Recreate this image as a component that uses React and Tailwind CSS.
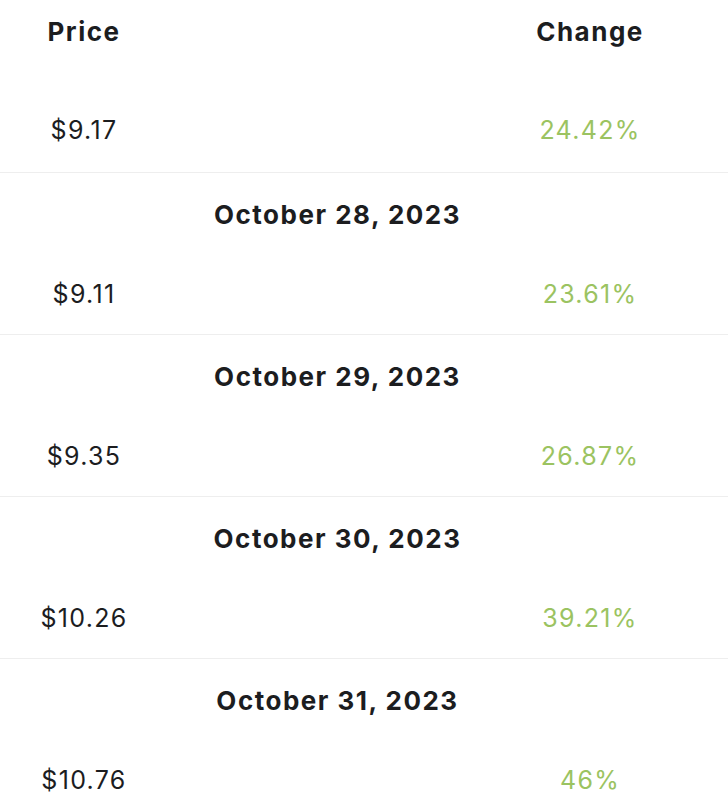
const rows = [
  { date: "October 28, 2023", price: "$9.11", change: "23.61%" },
  { date: "October 29, 2023", price: "$9.35", change: "26.87%" },
  { date: "October 30, 2023", price: "$10.26", change: "39.21%" },
  { date: "October 31, 2023", price: "$10.76", change: "46%" },
];

function PriceRow({ price, change, className }) {
  return (
    <div className={"flex items-center text-[25px] tracking-[1.3px] " + className}>
      <div className="w-[168px] text-center text-[#1c1d1f]">{price}</div>
      <div className="flex-1" />
      <div className="w-[276px] text-center text-[#9bc361]">{change}</div>
    </div>
  );
}

export default function App() {
  return (
    <div
      className="w-[728px] h-[812px] overflow-hidden bg-white"
      style={{ fontFamily: "Inter, 'Liberation Sans', sans-serif" }}
    >
      <div className="flex items-center h-[63px] text-[26px] tracking-[1.5px] font-bold text-[#1c1d1f]">
        <div className="w-[168px] text-center">Price</div>
        <div className="flex-1" />
        <div className="w-[276px] text-center">Change</div>
      </div>
      <PriceRow price="$9.17" change="24.42%" className="mt-[30px] h-[79px] pb-[4px]" />
      {rows.map((r) => (
        <div key={r.date} className="border-t border-[#eeeeee]">
          <div className="h-[82px] flex items-center justify-center pr-[53px] text-[26px] tracking-[1.5px] font-bold text-[#1c1d1f]">
            {r.date}
          </div>
          <PriceRow price={r.price} change={r.change} className="h-[79px]" />
        </div>
      ))}
    </div>
  );
}
